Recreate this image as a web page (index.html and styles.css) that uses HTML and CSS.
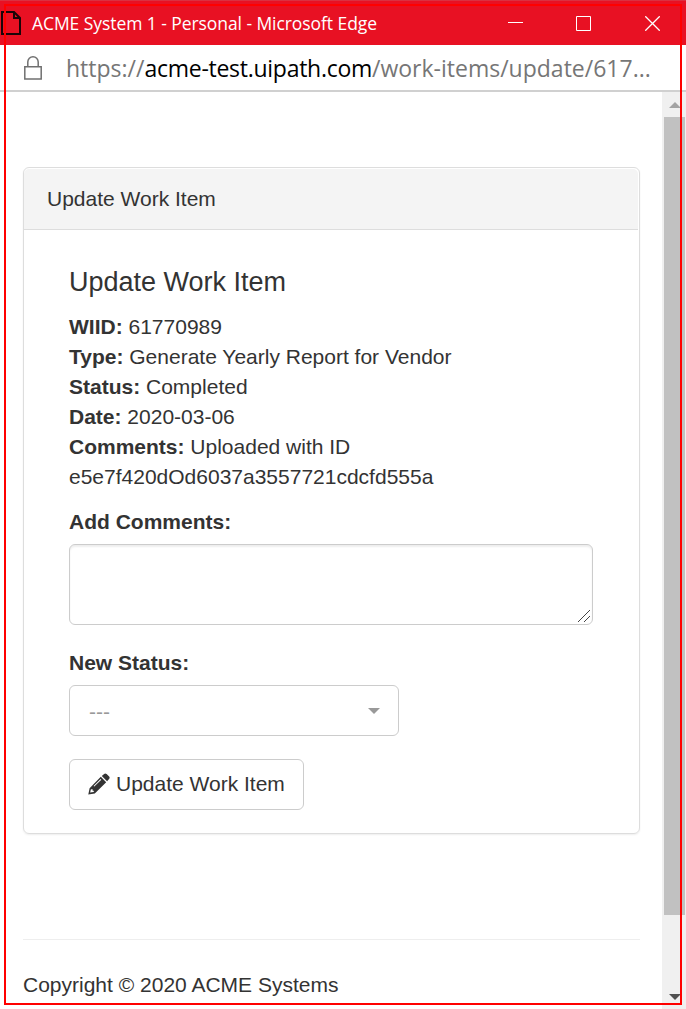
FILE: index.html
```html
<!DOCTYPE html>
<html lang="en">
<head>
<meta charset="utf-8">
<title>ACME System 1</title>
<link rel="stylesheet" href="styles.css">
</head>
<body>
<div class="window">
  <header class="titlebar">
    <svg class="doc-icon" width="22" height="25" viewBox="0 0 22 25" fill="none" stroke="#1a0508" stroke-width="2"><path d="M2 1H14L20 7V23H2ZM14 1V7H20"/></svg>
    <span class="window-title">ACME System 1 - Personal - Microsoft Edge</span>
    <div class="controls">
      <svg class="minimize" width="15" height="15" viewBox="0 0 15 15" stroke="#fff"><path d="M0 6.5H15"/></svg>
      <svg width="15" height="15" viewBox="0 0 15 15" fill="none" stroke="#fff"><path d="M.5 .5H14.5V14.5H.5Z"/></svg>
      <svg width="15" height="15" viewBox="0 0 15 15" stroke="#fff" stroke-width="1.3"><path d="M.3 .3L14.7 14.7M14.7 .3L.3 14.7"/></svg>
    </div>
  </header>
  <div class="address">
    <svg class="lock" width="18" height="24" viewBox="0 0 18 24" fill="none" stroke="#707070" stroke-width="1.5"><path d="M.8 10.8H17.2V23H.8ZM3.8 10.5V6A5.2 5.2 0 0 1 14.2 6V10.5"/></svg>
    <span class="url">https://<span class="host">acme-test.uipath.com</span>/work-items/update/617...</span>
  </div>
  <div class="viewport">
    <main class="content">
      <section class="panel">
        <div class="panel-heading">Update Work Item</div>
        <div class="panel-body">
          <h1>Update Work Item</h1>
          <p><b>WIID:</b> 61770989</p>
          <p><b>Type:</b> Generate Yearly Report for Vendor</p>
          <p><b>Status:</b> Completed</p>
          <p><b>Date:</b> 2020-03-06</p>
          <p><b>Comments:</b> Uploaded with ID<br>e5e7f420dOd6037a3557721cdcfd555a</p>
          <div class="label">Add Comments:</div>
          <div class="textarea"><svg width="12" height="12" viewBox="0 0 12 12" stroke="#444" stroke-width="1"><path d="M0 12L12 0M6 12L12 6"/></svg></div>
          <div class="label">New Status:</div>
          <div class="select"><span>---</span><i class="caret"></i></div>
          <div class="button"><svg width="22" height="22" viewBox="0 0 22 22" fill="#333"><path fill-rule="evenodd" d="M12.8 3.8L18.2 9.2L6.8 20.4L.3 21.5L1.6 15.2ZM2.8 16.6L2.2 19.6L5.4 19L6.3 17.9L4.5 17.6V16ZM12.6 6L5.6 12.9L6.3 13.5L13.3 6.7Z"/><path d="M13.8 2.9L16.1 .9Q17.4 -.1 18.6 1L21.1 3.5Q22.1 4.7 21.1 5.9L19.1 8.2Z"/></svg><span>Update Work Item</span></div>
        </div>
      </section>
      <footer>Copyright © 2020 ACME Systems</footer>
    </main>
    <aside class="scrollbar"><i class="arrow-up"></i><div class="thumb"></div><i class="arrow-down"></i></aside>
  </div>
  <div class="frame"></div>
</div>
</body>
</html>
```
FILE: styles.css
```css
* { box-sizing: border-box; }
body { margin: 0; background: #fff; color: #333; font: 21px/30px "Liberation Sans", Arial, sans-serif; }
.window { position: relative; width: 686px; height: 1009px; display: flex; flex-direction: column; overflow: hidden; }
.titlebar { height: 45px; flex: none; display: flex; align-items: center; background: #e81123; border-top: 1px solid #dc3040; color: #fff; padding: 0 26px 0 0; }
.doc-icon { margin-right: 10px; }
.window-title { font: 17.5px/24px "Open Sans", "Noto Sans", sans-serif; white-space: nowrap; letter-spacing: -0.07px; }
.controls { margin-left: auto; display: flex; gap: 54px; }
.minimize { margin-right: -1px; }
.address { height: 47px; flex: none; display: flex; align-items: center; border-bottom: 2px solid #d0d0d0; padding-left: 24px; }
.lock { margin-right: 24px; }
.url { font: 23px/32px "Open Sans", "Noto Sans", sans-serif; color: #767676; white-space: nowrap; padding-top: 1px; }
.host { color: #000; letter-spacing: -0.27px; }
.viewport { flex: 1; display: flex; min-height: 0; }
.content { flex: 1; padding: 75px 22px 0 23px; }
.panel { border: 1px solid #ddd; border-radius: 6px; box-shadow: 0 1px 2px rgba(0,0,0,.07); height: 667px; padding: 1px 1px 0 0; }
.panel-heading { height: 61px; padding: 15px 23px; background: #f4f4f4; border-bottom: 1px solid #ddd; border-radius: 5px 5px 0 0; }
.panel-body { padding: 37px 45px 0; }
h1 { margin: 0 0 15px; font-size: 27px; line-height: 30px; font-weight: 400; }
p { margin: 0; }
.label { font-weight: 700; margin: 15px 0 7px; }
.textarea { width: 524px; height: 81px; border: 1px solid #ccc; border-radius: 6px; box-shadow: inset 0 2px 2px rgba(0,0,0,.07); display: flex; justify-content: flex-end; align-items: flex-end; padding: 0 2px 2px 0; margin-bottom: 23px; }
.select { width: 330px; height: 51px; border: 1px solid #ccc; border-radius: 6px; color: #999; display: flex; align-items: center; justify-content: space-between; padding: 2px 18px 0 19px; }
.caret { border: 6px solid transparent; border-top-color: #999; border-bottom: 0; margin-bottom: 2px; }
.button { width: 235px; height: 51px; margin-top: 23px; border: 1px solid #ccc; border-radius: 6px; display: flex; align-items: center; padding: 0 0 2px 18px; gap: 6px; white-space: nowrap; }
footer { margin-top: 105px; padding-top: 30px; border-top: 1px solid #eee; }
.scrollbar { width: 24px; background: #f0f0f0; display: flex; flex-direction: column; align-items: center; padding: 10px 1px 8px 2px; }
.arrow-up { border: 6px solid transparent; border-bottom-color: #a3a3a3; border-top: 0; margin-bottom: 9px; }
.thumb { width: 21px; height: 798px; background: #c1c1c1; }
.arrow-down { border: 6px solid transparent; border-top-color: #505050; border-bottom: 0; margin-top: 79px; }
.frame { position: absolute; left: 4px; top: 4px; width: 678px; height: 1001px; border: 2px solid #f00; }
```
